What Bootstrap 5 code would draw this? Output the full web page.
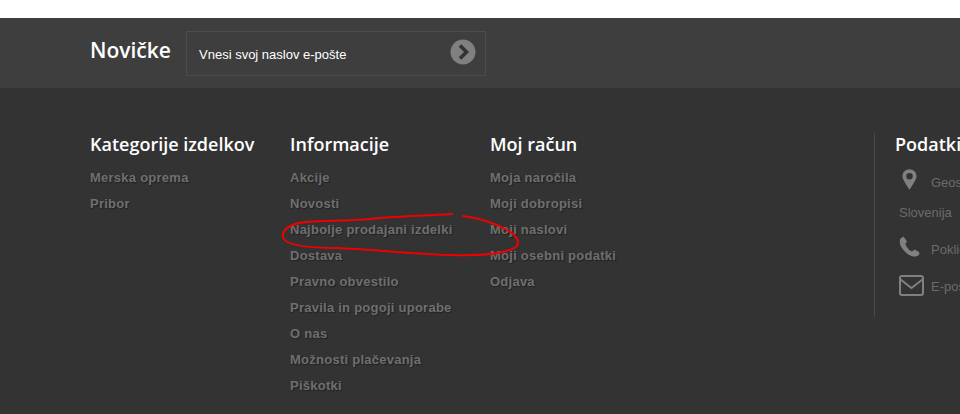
<!DOCTYPE html>
<html lang="sl">
<head>
    <meta charset="UTF-8">
    <meta name="viewport" content="width=device-width, initial-scale=1.0">
    <title>Noge strani</title>
    <link rel="stylesheet" href="https://cdn.jsdelivr.net/npm/bootstrap@5.3.0/dist/css/bootstrap.min.css">
    <style>
        html, body { height: 414px; overflow: hidden; }
        body { background: #fff; font-family: "Liberation Sans", Arial, sans-serif; }
        .page-foot { margin-top: 18px; background: #333; height: 396px; position: relative; overflow: hidden; }
        .news-band { background: #3e3e3e; height: 70px; padding-left: 90px; padding-top: 13px; }
        .news-title { font-family: "Open Sans", sans-serif; font-weight: 600; font-size: 21px; line-height: 38px; color: #fff; width: 96px; margin: 0; }
        .news-box { width: 300px; height: 45px; border: 1px solid #4c4c4c; padding: 0 9px 0 12px; color: #fff; font-size: 13px; }
        .news-text { padding-top: 2px; }
        .news-go { margin-bottom: 4px; }
        .foot-cols { padding: 44px 0 0 90px; width: 1200px; }
        .foot-col { width: 200px; flex: none; }
        .foot-head { font-family: "Open Sans", sans-serif; font-weight: 600; font-size: 18px; line-height: 24px; color: #fff; margin: 0 0 9px; }
        .foot-link { display: block; font-weight: 700; font-size: 13px; line-height: 26px; letter-spacing: .25px; color: #6f6f6f; text-decoration: none; text-shadow: 1px 1px 1px #222; }
        .info-col { margin: 1px 0 0 184px; width: 300px; flex: none; border-left: 1px solid #4a4a4a; height: 184px; padding-left: 20px; }
        .info-col .foot-head { margin-top: -1px; }
        .info-row { color: #6b6b6b; font-size: 13px; line-height: 16px; padding-left: 4px; }
        .info-ico { width: 32px; flex: none; }
        .info-ico svg { display: block; }
        .info-pin { margin-top: 12px; height: 23px; }
        .info-pin svg { margin-left: 3px; }
        .info-place { margin-top: 14px; }
        .info-phone { margin-top: 15px; height: 22px; }
        .info-mail { margin-top: 17px; height: 21px; }
        .info-mail span:last-child { padding-bottom: 1px; }
        .scribble { position: absolute; left: 0; top: -18px; pointer-events: none; }
    </style>
</head>
<body>
    <div class="page-foot">
        <!-- newsletter -->
        <div class="news-band d-flex">
            <h4 class="news-title">Novičke</h4>
            <div class="news-box d-flex align-items-center justify-content-between">
                <span class="news-text">Vnesi svoj naslov e-pošte</span>
                <svg class="news-go" width="26" height="26" viewBox="0 0 26 26">
                    <circle cx="13" cy="13" r="12.5" fill="#808080"/>
                    <path d="M10 6.5 L16.5 13 L10 19.5" fill="none" stroke="#333" stroke-width="3.6"/>
                </svg>
            </div>
        </div>

        <!-- footer columns -->
        <div class="foot-cols d-flex">
            <div class="foot-col">
                <h5 class="foot-head">Kategorije izdelkov</h5>
                <a class="foot-link" href="#">Merska oprema</a>
                <a class="foot-link" href="#">Pribor</a>
            </div>
            <div class="foot-col">
                <h5 class="foot-head">Informacije</h5>
                <a class="foot-link" href="#">Akcije</a>
                <a class="foot-link" href="#">Novosti</a>
                <a class="foot-link" href="#">Najbolje prodajani izdelki</a>
                <a class="foot-link" href="#">Dostava</a>
                <a class="foot-link" href="#">Pravno obvestilo</a>
                <a class="foot-link" href="#">Pravila in pogoji uporabe</a>
                <a class="foot-link" href="#">O nas</a>
                <a class="foot-link" href="#">Možnosti plačevanja</a>
                <a class="foot-link" href="#">Piškotki</a>
            </div>
            <div class="foot-col">
                <h5 class="foot-head">Moj račun</h5>
                <a class="foot-link" href="#">Moja naročila</a>
                <a class="foot-link" href="#">Moji dobropisi</a>
                <a class="foot-link" href="#">Moji naslovi</a>
                <a class="foot-link" href="#">Moji osebni podatki</a>
                <a class="foot-link" href="#">Odjava</a>
            </div>
            <div class="info-col">
                <h5 class="foot-head">Podatki</h5>
                <div class="info-row info-pin d-flex align-items-end">
                    <span class="info-ico">
                        <svg width="15" height="23" viewBox="0 0 16 23"><path fill-rule="evenodd" fill="#808080" d="M8 0.5C3.8 0.5 0.5 3.8 0.5 8 C0.5 12 5.5 18 8 22.5 C10.5 18 15.5 12 15.5 8 C15.5 3.8 12.2 0.5 8 0.5Z M8 4.5 A3.5 3.5 0 1 1 8 11.5 A3.5 3.5 0 1 1 8 4.5Z"/></svg>
                    </span>
                    <span>Geos</span>
                </div>
                <div class="info-row info-place">Slovenija</div>
                <div class="info-row info-phone d-flex align-items-end">
                    <span class="info-ico align-self-start">
                        <svg width="21" height="21" viewBox="0 0 21 21"><path fill="#808080" d="M4.5 0.5 L1.5 2.5 C0.2 5 0.6 8.5 3 12 C5.5 16 9.5 19.5 14 20.5 C16.5 20.8 19.5 20 20.5 18 L20 16 L15.5 13.5 L13 15.5 C10.5 14.8 7 10.5 6.3 8 L8 5.5 Z"/></svg>
                    </span>
                    <span>Poklicite</span>
                </div>
                <div class="info-row info-mail d-flex align-items-end">
                    <span class="info-ico align-self-start">
                        <svg width="25" height="21" viewBox="0 0 25 21"><rect x="1" y="1" width="23" height="19" rx="2" fill="none" stroke="#808080" stroke-width="2"/><path d="M1.5 4.5 L12.5 13 L23.5 4.5" fill="none" stroke="#808080" stroke-width="2"/></svg>
                    </span>
                    <span>E-pošta</span>
                </div>
            </div>
        </div>

        <!-- hand drawn mark over the screenshot -->
        <svg class="scribble" width="960" height="414" viewBox="0 0 960 414">
            <path d="M452 214 C425 216 395 216 370 219 C340 222 310 219 295 224 C284 228 281 234 284 239 C289 246 315 248 337 248 C370 249 410 254 450 255 C480 256 505 254 516 247 C521 241 516 235 507 230 C495 223 478 218 463 216" fill="none" stroke="#f00000" stroke-width="2" stroke-linecap="round"/>
        </svg>
    </div>
    <script src="https://cdn.jsdelivr.net/npm/bootstrap@5.3.0/dist/js/bootstrap.bundle.min.js"></script>
</body>
</html>
